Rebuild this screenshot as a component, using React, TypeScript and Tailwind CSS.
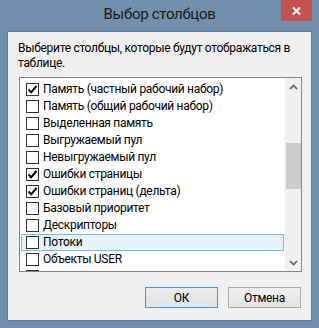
import React from 'react';

const items: { label: string; checked: boolean }[] = [
  { label: 'Память (частный рабочий набор)', checked: true },
  { label: 'Память (общий рабочий набор)', checked: false },
  { label: 'Выделенная память', checked: false },
  { label: 'Выгружаемый пул', checked: false },
  { label: 'Невыгружаемый пул', checked: false },
  { label: 'Ошибки страницы', checked: true },
  { label: 'Ошибки страниц (дельта)', checked: true },
  { label: 'Базовый приоритет', checked: false },
  { label: 'Дескрипторы', checked: false },
  { label: 'Потоки', checked: false },
  { label: 'Объекты USER', checked: false },
  // only the top of this row's box shows above the list's lower edge
  { label: '', checked: false },
];

const font = { fontFamily: 'Roboto, "Liberation Sans", sans-serif' };

const Checkbox: React.FC<{ checked: boolean }> = ({ checked }) => (
  <div className="w-[13px] h-[13px] shrink-0 border border-[#333333] bg-white flex items-center justify-center">
    {checked && (
      <svg width="11" height="11" viewBox="0 0 11 11">
        <path d="M1.5 5.5 L4.2 8.3 L9.5 2" fill="none" stroke="#000" strokeWidth="2" />
      </svg>
    )}
  </div>
);

const App: React.FC = () => {
  return (
    <div
      className="w-[319px] h-[328px] bg-[#7190ab] flex flex-col overflow-hidden relative tracking-[-0.3px]"
      style={font}
    >
      {/* Title bar */}
      <div className="h-[31px] shrink-0 flex items-center justify-center text-[15px] text-[#1a1a1a] pb-[2px]">
        Выбор столбцов
      </div>
      <div className="absolute top-0 right-[7px] w-[31px] h-[21px] bg-[#c75050] flex items-center justify-center">
        <svg width="9" height="8" viewBox="0 0 9 8">
          <path d="M1 0.5 L8 7.5 M8 0.5 L1 7.5" stroke="#fff" strokeWidth="2" />
        </svg>
      </div>

      {/* Client area */}
      <div className="mx-[7px] h-[290px] border border-[#5f7e99] bg-[#f0f0f0] flex flex-col">
        <p className="pl-[10px] pr-[10px] pt-[9px] text-[12px] leading-[15px] text-black">
          Выберите столбцы, которые будут отображаться в таблице.
        </p>

        {/* List box */}
        <div className="ml-[11px] mt-[6px] w-[283px] h-[195px] border border-[#828790] bg-white flex">
          <div className="flex-1 overflow-hidden pt-[3px] pl-[1px]">
            {items.map((it, i) => (
              <div
                key={i}
                className={
                  'h-[17px] flex items-center gap-[4px] pl-[4px] text-[12px] text-black border ' +
                  (i === 9 ? 'bg-[#e5f3fb] border-[#70c0e7]' : 'border-transparent')
                }
              >
                <Checkbox checked={it.checked} />
                {it.label && <span className="whitespace-nowrap leading-[15px]">{it.label}</span>}
              </div>
            ))}
          </div>
          {/* Scrollbar */}
          <div className="w-[17px] shrink-0 bg-[#f0f0f0] border-l border-[#f7f7f7] flex flex-col items-center">
            <div className="h-[17px] w-full flex items-center justify-center">
              <svg width="9" height="6" viewBox="0 0 9 6">
                <path d="M1 5 L4.5 1.5 L8 5" fill="none" stroke="#606060" strokeWidth="1.6" />
              </svg>
            </div>
            <div className="h-[48px]" />
            <div className="w-[15px] h-[46px] bg-[#cdcdcd]" />
            <div className="flex-1" />
            <div className="h-[17px] w-full flex items-center justify-center">
              <svg width="9" height="6" viewBox="0 0 9 6">
                <path d="M1 1 L4.5 4.5 L8 1" fill="none" stroke="#606060" strokeWidth="1.6" />
              </svg>
            </div>
          </div>
        </div>

        {/* Buttons */}
        <div className="mt-[15px] flex justify-end gap-[10px] pr-[10px]">
          <button className="w-[73px] h-[21px] border border-[#3c9ae6] bg-gradient-to-b from-[#ececec] to-[#e2e2e2] text-[12px] text-black leading-none">
            ОК
          </button>
          <button className="w-[73px] h-[21px] border border-[#acacac] bg-gradient-to-b from-[#f0f0f0] to-[#e5e5e5] text-[12px] text-black leading-none">
            Отмена
          </button>
        </div>
      </div>
    </div>
  );
};

export default App;
